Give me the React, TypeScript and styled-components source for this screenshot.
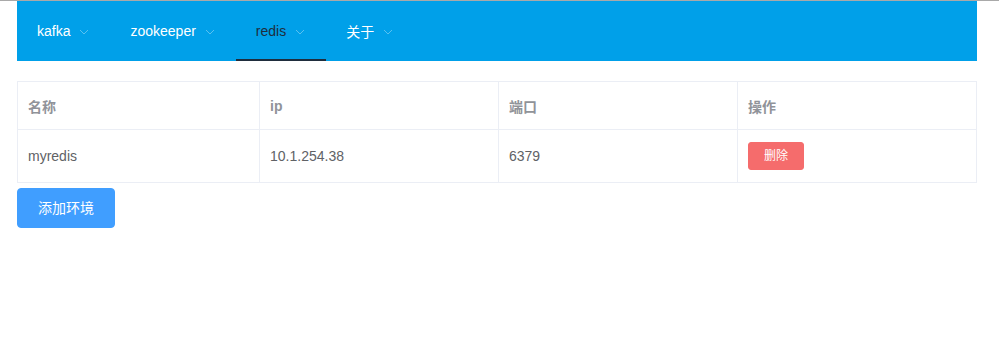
import React from 'react'
import styled, { createGlobalStyle } from 'styled-components'

const GlobalStyle = createGlobalStyle`
  html, body {
    margin: 0;
    padding: 0;
    background: #fff;
    font-family: "Liberation Sans", "Noto Sans CJK SC", Arial, sans-serif;
    font-size: 14px;
  }
`

const Page = styled.div`
  border-top: 1px solid #a9a9a9;
  padding: 0 22px 0 17px;
`

const NavBar = styled.ul`
  display: flex;
  margin: 0;
  padding: 0;
  list-style: none;
  height: 60px;
  background: #00a0e9;
`

const NavItem = styled.li<{ $active?: boolean }>`
  display: flex;
  align-items: center;
  height: 60px;
  padding: 0 20px;
  box-sizing: border-box;
  color: ${(p) => (p.$active ? '#1f2d3d' : '#fff')};
  border-bottom: 2px solid ${(p) => (p.$active ? '#1f2d3d' : 'transparent')};
  border-top: 2px solid transparent;
  font-size: 14px;
  cursor: pointer;
`

const Arrow = styled.svg`
  width: 12px;
  height: 12px;
  margin-left: 8px;
  margin-top: 1px;
`

const Content = styled.div`
  padding-top: 20px;
`

const Table = styled.div`
  border: 1px solid #ebeef5;
  border-right: none;
  border-bottom: none;
`

const Row = styled.div<{ $head?: boolean }>`
  display: grid;
  grid-template-columns: 242px 239px 239px 1fr;
  height: ${(p) => (p.$head ? '48px' : '53px')};
  color: ${(p) => (p.$head ? '#909399' : '#606266')};
  font-weight: ${(p) => (p.$head ? 'bold' : 'normal')};
`

const Cell = styled.div`
  display: flex;
  align-items: center;
  padding: 0 10px;
  border-right: 1px solid #ebeef5;
  border-bottom: 1px solid #ebeef5;
  font-size: 14px;
`

const Button = styled.button<{ $variant?: 'primary' | 'danger'; $small?: boolean }>`
  font-family: inherit;
  border: 1px solid ${(p) => (p.$variant === 'danger' ? '#f56c6c' : '#409eff')};
  background: ${(p) => (p.$variant === 'danger' ? '#f56c6c' : '#409eff')};
  color: #fff;
  border-radius: ${(p) => (p.$small ? '3px' : '4px')};
  padding: ${(p) => (p.$small ? '0 15px' : '0 20px')};
  height: ${(p) => (p.$small ? '28px' : '40px')};
  font-size: ${(p) => (p.$small ? '12px' : '14px')};
  line-height: 1;
  cursor: pointer;
`

const Actions = styled.div`
  margin-top: 5px;
`

const ArrowIcon = () => (
  <Arrow viewBox="0 0 12 12">
    <polyline points="2,4 6,8 10,4" fill="none" stroke="rgba(255,255,255,0.35)" strokeWidth="1" />
  </Arrow>
)

const menus = ['kafka', 'zookeeper', 'redis', '关于']

const rows = [{ name: 'myredis', ip: '10.1.254.38', port: '6379' }]

export default function App() {
  return (
    <Page>
      <GlobalStyle />
      <NavBar>
        {menus.map((m) => (
          <NavItem key={m} $active={m === 'redis'}>
            {m}
            <ArrowIcon />
          </NavItem>
        ))}
      </NavBar>
      <Content>
        <Table>
          <Row $head>
            <Cell>名称</Cell>
            <Cell>ip</Cell>
            <Cell>端口</Cell>
            <Cell>操作</Cell>
          </Row>
          {rows.map((r) => (
            <Row key={r.name}>
              <Cell>{r.name}</Cell>
              <Cell>{r.ip}</Cell>
              <Cell>{r.port}</Cell>
              <Cell>
                <Button $variant="danger" $small>
                  删除
                </Button>
              </Cell>
            </Row>
          ))}
        </Table>
        <Actions>
          <Button $variant="primary">添加环境</Button>
        </Actions>
      </Content>
    </Page>
  )
}
